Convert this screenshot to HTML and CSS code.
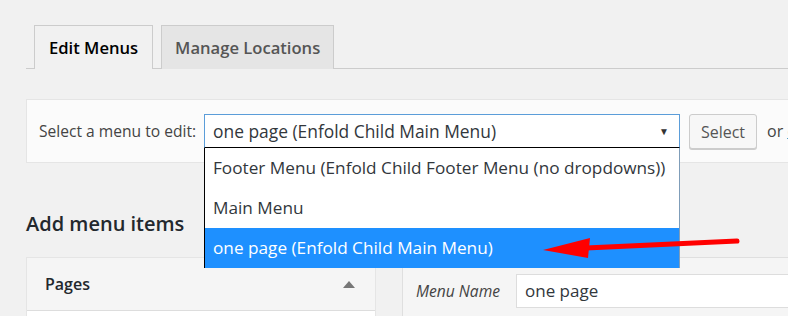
FILE: index.html
```html
<!DOCTYPE html>
<html lang="en">
<head>
    <meta charset="UTF-8">
    <title>Menus</title>
    <link rel="stylesheet" href="styles.css">
</head>
<body>

<div class="wrap">
    <div class="tabs">
        <div class="tab active">Edit Menus</div>
        <div class="tab">Manage Locations</div>
    </div>

    <div class="manage-menus">
        <span class="label">Select a menu to edit:</span>
        <div class="select">
            <span>one page (Enfold Child Main Menu)</span>
            <span class="caret">&#9660;</span>
        </div>
        <button class="button">Select</button>
        <span class="or">or <a href="#">create a new menu</a></span>
    </div>

    <div class="columns">
        <div class="left">
            <h2>Add menu items</h2>
            <div class="box">
                <div class="box-head">
                    <span>Pages</span>
                    <span class="arrow-up"></span>
                </div>
            </div>
        </div>
        <div class="right">
            <div class="menu-head">
                <label>Menu Name</label>
                <div class="input">one page</div>
            </div>
        </div>
    </div>

    <!-- open dropdown of the select, drawn over the page -->
    <div class="options">
        <div class="option">Footer Menu (Enfold Child Footer Menu (no dropdowns))</div>
        <div class="option">Main Menu</div>
        <div class="option selected">one page (Enfold Child Main Menu)</div>
    </div>

    <svg class="annotation" width="788" height="316" viewBox="0 0 788 316">
        <line x1="586" y1="248" x2="737" y2="241" stroke="#f00" stroke-width="5" stroke-linecap="round"/>
        <polygon points="543,250 590,238 588,258" fill="#f00"/>
    </svg>
</div>

</body>
</html>
```

FILE: styles.css
```css
body {
    background-color: #f1f1f1;
    color: #23282d;
    font-family: "Open Sans", sans-serif;
    margin: 0;
}

.wrap {
    position: relative;
    padding: 25px 0 0 26px;
    height: 316px;
    box-sizing: border-box;
    overflow: hidden;
}

.tabs {
    display: flex;
    gap: 8px;
    padding-left: 8px;
    border-bottom: 1px solid #ccc;
    height: 43px;
}

.tab {
    border: 1px solid #ccc;
    border-bottom: none;
    background-color: #e5e5e5;
    color: #555;
    font-size: 16.6px;
    font-weight: 600;
    padding: 0 13px;
    line-height: 43px;
    height: 44px;
    box-sizing: border-box;
}

.tab.active {
    background-color: #f1f1f1;
    color: #000;
    margin-bottom: -1px;
    padding: 0 14px;
}

.manage-menus {
    margin-top: 30px;
    background-color: #fbfbfb;
    border: 1px solid #e5e5e5;
    border-right: none;
    display: flex;
    align-items: flex-start;
    padding: 14px 0 0 12px;
    box-sizing: border-box;
    height: 64px;
    white-space: nowrap;
}

.manage-menus > * {
    flex: none;
}

.label {
    font-size: 15.6px;
    color: #444;
    line-height: 34px;
    width: 165px;
}

.select {
    width: 476px;
    height: 34px;
    border: 1px solid #5b9dd9;
    border-bottom-color: #000;
    background-color: #fff;
    box-sizing: border-box;
    display: flex;
    justify-content: space-between;
    align-items: center;
    padding: 0 8px;
    font-size: 17.4px;
    color: #32373c;
}

.caret {
    font-size: 10px;
    color: #333;
    padding-right: 2px;
}

.options {
    position: absolute;
    top: 148px;
    left: 204px;
    width: 476px;
    box-sizing: border-box;
    background-color: #fff;
    border-left: 1px solid #000;
    border-right: 1px solid #7f9db9;
    z-index: 2;
}

.option {
    height: 40px;
    line-height: 40px;
    padding-left: 8px;
    font-size: 17.2px;
    color: #32373c;
    white-space: nowrap;
}

.option.selected {
    background-color: #1e90ff;
    color: #fff;
}

.button {
    margin-left: 9px;
    height: 35px;
    width: 68px;
    border: 1px solid #ccc;
    border-radius: 3px;
    background-color: #f7f7f7;
    box-shadow: 0 1px 0 #ccc;
    color: #555;
    font-family: "Open Sans", sans-serif;
    font-size: 16px;
    padding: 0;
}

.or {
    margin-left: 10px;
    font-size: 16px;
    color: #444;
    line-height: 34px;
}

.or a {
    color: #0073aa;
}

.columns {
    display: flex;
    gap: 26px;
}

.left {
    width: 350px;
    flex: none;
}

.left h2 {
    font-size: 20px;
    font-weight: 600;
    margin: 47px 0 19px;
    line-height: 28px;
}

.box {
    border: 1px solid #e5e5e5;
    background-color: #fff;
    height: 70px;
}

.box-head {
    background-color: #f5f5f5;
    height: 52px;
    border-bottom: 1px solid #ddd;
    display: flex;
    align-items: center;
    justify-content: space-between;
    padding: 0 18px;
    font-size: 16px;
    font-weight: 600;
}

.arrow-up {
    width: 0;
    height: 0;
    border-left: 6px solid transparent;
    border-right: 6px solid transparent;
    border-bottom: 7px solid #777;
    margin-right: 2px;
}

.right {
    flex: 1;
    margin-top: 94px;
}

.menu-head {
    background-color: #f5f5f5;
    border: 1px solid #dfdfdf;
    border-right: none;
    height: 70px;
    display: flex;
    align-items: flex-start;
    padding: 16px 0 0 13px;
    box-sizing: border-box;
}

.menu-head label {
    font-style: italic;
    font-size: 15.6px;
    color: #444;
    width: 100px;
    flex: none;
    line-height: 34px;
}

.input {
    flex: 1;
    height: 34px;
    border: 1px solid #ddd;
    border-right: none;
    background-color: #fff;
    box-sizing: border-box;
    padding-left: 8px;
    line-height: 32px;
    font-size: 17px;
    color: #32373c;
}

.annotation {
    position: absolute;
    top: 0;
    left: 0;
    z-index: 3;
}
```
